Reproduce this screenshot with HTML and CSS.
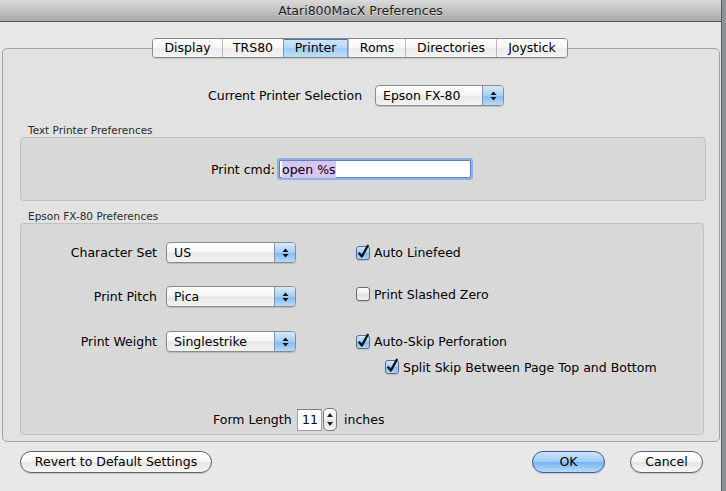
FILE: index.html
```html
<!DOCTYPE html>
<html>
<head>
<meta charset="utf-8">
<title>Atari800MacX Preferences</title>
<link rel="stylesheet" href="styles.css">
</head>
<body>
<div class="window">
  <div class="titlebar">Atari800MacX Preferences</div>
  <div class="content">
    <div class="tabs">
      <span class="tab t-display">Display</span>
      <span class="tab t-trs">TRS80</span>
      <span class="tab t-printer active">Printer</span>
      <span class="tab t-roms">Roms</span>
      <span class="tab t-dirs">Directories</span>
      <span class="tab t-joy">Joystick</span>
    </div>
    <div class="tabbox">
      <div class="cur-row">
        <span class="cur-lbl">Current Printer Selection</span>
        <div class="popup p-printer">
          <span class="pv">Epson FX-80</span>
          <span class="arr"><svg width="7" height="10" viewBox="0 0 7 10"><polygon points="0.5,4 3.5,0.5 6.5,4" fill="#111"/><polygon points="0.5,6 3.5,9.5 6.5,6" fill="#111"/></svg></span>
        </div>
      </div>

      <div class="legend">Text Printer Preferences</div>
      <div class="group g1">
        <span class="cmd-lbl">Print cmd:</span>
        <div class="field"><span class="sel">open %s</span></div>
      </div>

      <div class="legend l2">Epson FX-80 Preferences</div>
      <div class="group g2">
        <div class="row r1">
          <span class="rlbl">Character Set</span>
          <div class="popup p-wide">
            <span class="pv">US</span>
            <span class="arr"><svg width="7" height="10" viewBox="0 0 7 10"><polygon points="0.5,4 3.5,0.5 6.5,4" fill="#111"/><polygon points="0.5,6 3.5,9.5 6.5,6" fill="#111"/></svg></span>
          </div>
          <label class="chk-item"><span class="cb on"><svg width="12" height="12" viewBox="0 0 12 12"><path d="M1.8 5.6 L4.8 9.6 L11.2 -2" fill="none" stroke="#141414" stroke-width="2.3" stroke-linejoin="round"/></svg></span><span>Auto Linefeed</span></label>
        </div>
        <div class="row r2">
          <span class="rlbl">Print Pitch</span>
          <div class="popup p-wide">
            <span class="pv">Pica</span>
            <span class="arr"><svg width="7" height="10" viewBox="0 0 7 10"><polygon points="0.5,4 3.5,0.5 6.5,4" fill="#111"/><polygon points="0.5,6 3.5,9.5 6.5,6" fill="#111"/></svg></span>
          </div>
          <label class="chk-item up"><span class="cb"></span><span>Print Slashed Zero</span></label>
        </div>
        <div class="row r3">
          <span class="rlbl">Print Weight</span>
          <div class="popup p-wide">
            <span class="pv">Singlestrike</span>
            <span class="arr"><svg width="7" height="10" viewBox="0 0 7 10"><polygon points="0.5,4 3.5,0.5 6.5,4" fill="#111"/><polygon points="0.5,6 3.5,9.5 6.5,6" fill="#111"/></svg></span>
          </div>
          <label class="chk-item"><span class="cb on"><svg width="12" height="12" viewBox="0 0 12 12"><path d="M1.8 5.6 L4.8 9.6 L11.2 -2" fill="none" stroke="#141414" stroke-width="2.3" stroke-linejoin="round"/></svg></span><span>Auto-Skip Perforation</span></label>
        </div>
        <div class="row split">
          <label class="chk-item flush"><span class="cb on"><svg width="12" height="12" viewBox="0 0 12 12"><path d="M1.8 5.6 L4.8 9.6 L11.2 -2" fill="none" stroke="#141414" stroke-width="2.3" stroke-linejoin="round"/></svg></span><span>Split Skip Between Page Top and Bottom</span></label>
        </div>
        <div class="row form">
          <span class="fl-lbl">Form Length</span>
          <span class="numfield">11</span>
          <span class="stepper"><svg width="6" height="4" viewBox="0 0 6 4"><polygon points="0,4 3,0 6,4" fill="#222"/></svg><svg width="6" height="4" viewBox="0 0 6 4"><polygon points="0,0 3,4 6,0" fill="#222"/></svg></span>
          <span class="inches">inches</span>
        </div>
      </div>
    </div>
    <div class="buttons">
      <span class="btn revert">Revert to Default Settings</span>
      <span class="btn ok">OK</span>
      <span class="btn cancel">Cancel</span>
    </div>
  </div>
</div>
</body>
</html>
```
FILE: styles.css
```css
* { box-sizing: border-box; }
html, body { margin: 0; padding: 0; }
body {
  width: 726px;
  height: 491px;
  overflow: hidden;
  background: #8e939a;
  font-family: "DejaVu Sans", "Liberation Sans", sans-serif;
  font-size: 12.5px;
  color: #000;
}
.window {
  width: 722px;
  height: 491px;
  background: #e8e8e8;
  border-right: 1px solid #5c5c5c;
  display: flex;
  flex-direction: column;
}
.titlebar {
  height: 22px;
  border-bottom: 1px solid #555;
  background: linear-gradient(#dadada, #bfbfbf 55%, #a9a9a9);
  text-align: center;
  line-height: 22px;
  color: #1e1e1e;
  text-shadow: 0 1px 0 rgba(255,255,255,0.45);
}
.content { padding-top: 16px; }

/* segmented tabs */
.tabs {
  display: flex;
  width: 416px;
  height: 20px;
  margin-left: 152px;
  margin-bottom: -10px;
  position: relative;
  z-index: 1;
  border: 1px solid #878787;
  border-radius: 4px;
  overflow: hidden;
  box-shadow: 0 1px 1px rgba(0,0,0,0.12);
}
.tab {
  line-height: 18px;
  text-align: center;
  white-space: nowrap;
  background: linear-gradient(#ffffff, #f6f6f6 50%, #ebebeb 51%, #f4f4f4);
  border-left: 1px solid #b8b8b8;
}
.tab:first-child { border-left: 0; }
.t-display { width: 69px; }
.t-trs { width: 61px; }
.t-printer { width: 65px; }
.t-roms { width: 57px; }
.t-dirs { width: 91px; }
.t-joy { width: 71px; }
.tab.active {
  background: linear-gradient(#d2e8fc, #b3d7f8 50%, #9ccbf5 51%, #bfe0fb);
  border-left-color: #7e97bd;
  border-right: 1px solid #7e97bd;
  box-shadow: inset 0 1px 0 #4f72ad;
}

/* tab box */
.tabbox {
  margin-left: 2px;
  width: 718px;
  height: 394px;
  border: 1px solid #a3a3a3;
  border-radius: 5px;
  background: #e2e2e2;
  padding-top: 36px;
}
.cur-row {
  display: flex;
  align-items: center;
  height: 21px;
  padding-left: 205px;
}
.cur-lbl {
  width: 154px;
  text-align: right;
  margin-right: 13px;
  white-space: nowrap;
}
.popup {
  display: flex;
  height: 21px;
  border: 1px solid #8b8b8b;
  border-radius: 4px;
  background: linear-gradient(#ffffff, #f7f7f7 45%, #e8e8e8 55%, #f3f3f3);
  box-shadow: 0 1px 1px rgba(0,0,0,0.15);
  overflow: hidden;
}
.p-printer { width: 129px; }
.p-wide { width: 130px; }
.popup .pv {
  flex: 1;
  padding-left: 7px;
  line-height: 19px;
  white-space: nowrap;
}
.popup .arr {
  width: 21px;
  border-left: 1px solid #7d95bd;
  background: linear-gradient(#d6eafc, #a7cff6 50%, #82b9f0 51%, #b7dbfa);
  display: flex;
  align-items: center;
  justify-content: center;
}
.popup .arr svg { display: block; }

.legend {
  font-size: 10.5px;
  line-height: 13px;
  margin-left: 25px;
  margin-top: 18px;
  color: #2b2b2b;
  white-space: nowrap;
}
.legend.l2 { margin-top: 9px; }
.group {
  margin-left: 17px;
  border: 1px solid #c0c0c0;
  border-radius: 4px;
  background: #d8d8d8;
}
.g1 {
  width: 686px;
  height: 64px;
  display: flex;
  align-items: center;
  padding-left: 190px;
}
.cmd-lbl {
  width: 62px;
  text-align: right;
  margin-right: 4px;
  white-space: nowrap;
}
.field {
  width: 196px;
  height: 22px;
  border: 2px solid #8eb3e3;
  border-radius: 3px;
  box-shadow: inset 0 0 0 1px #5d82bb;
  background: #fff;
  padding-left: 3px;
  display: flex;
  align-items: center;
}
.sel {
  background: #d7c5f2;
  line-height: 17px;
  white-space: nowrap;
}

.g2 {
  width: 684px;
  height: 212px;
  padding-top: 18px;
}
.row {
  display: flex;
  align-items: center;
  height: 21px;
}
.r2 { margin-top: 23px; }
.r3 { margin-top: 24px; }
.rlbl {
  width: 136px;
  text-align: right;
  margin-right: 9px;
  white-space: nowrap;
}
.chk-item {
  display: flex;
  align-items: center;
  margin-left: 60px;
  white-space: nowrap;
}
.chk-item.up { margin-bottom: 5px; }
.chk-item.flush { margin-left: 0; }
.cb {
  width: 14px;
  height: 14px;
  border: 1px solid #6b6b6b;
  border-radius: 3px;
  background: linear-gradient(#ffffff, #ececec 50%, #e0e0e0 51%, #f2f2f2);
  margin-right: 4px;
  box-shadow: 0 1px 1px rgba(0,0,0,0.12);
  flex: none;
}
.cb.on {
  background: linear-gradient(#d3e8fc, #a3cdf6 50%, #7db5ee 51%, #b2d8fa);
  border-color: #4e6c9e;
}
.cb svg { display: block; overflow: visible; }

.row.split {
  height: 18px;
  margin-top: 6px;
  padding-left: 364px;
}
.row.form {
  height: 23px;
  margin-top: 32px;
  padding-left: 192px;
}
.fl-lbl {
  width: 79px;
  margin-right: 5px;
  white-space: nowrap;
}
.numfield {
  width: 25px;
  height: 22px;
  border: 1px solid #a0a0a0;
  border-top-color: #7c7c7c;
  background: #fff;
  padding-left: 4px;
  line-height: 20px;
}
.stepper {
  width: 14px;
  height: 23px;
  margin-left: 1px;
  border: 1px solid #7a7a7a;
  border-radius: 5px;
  background: linear-gradient(#ffffff, #f0f0f0 50%, #e2e2e2 51%, #f4f4f4);
  display: flex;
  flex-direction: column;
  align-items: center;
  justify-content: space-between;
  padding: 4px 0;
}
.stepper svg { display: block; }
.inches { margin-left: 7px; }

/* bottom buttons */
.buttons {
  display: flex;
  margin-top: 9px;
  padding: 0 18px 0 20px;
}
.btn {
  height: 22px;
  border: 1px solid #636363;
  border-radius: 11px;
  background: linear-gradient(#ffffff, #f5f5f5 50%, #e4e4e4 51%, #f7f7f7);
  box-shadow: 0 1px 1px rgba(0,0,0,0.15);
  line-height: 20px;
  text-align: center;
  white-space: nowrap;
}
.revert { width: 192px; }
.ok {
  width: 73px;
  margin-left: auto;
  border-color: #3e5e95;
  background: linear-gradient(#cde5fc, #9dcbf6 50%, #76b3ef 51%, #b4dcfb);
}
.cancel { width: 73px; margin-left: 25px; }
```
